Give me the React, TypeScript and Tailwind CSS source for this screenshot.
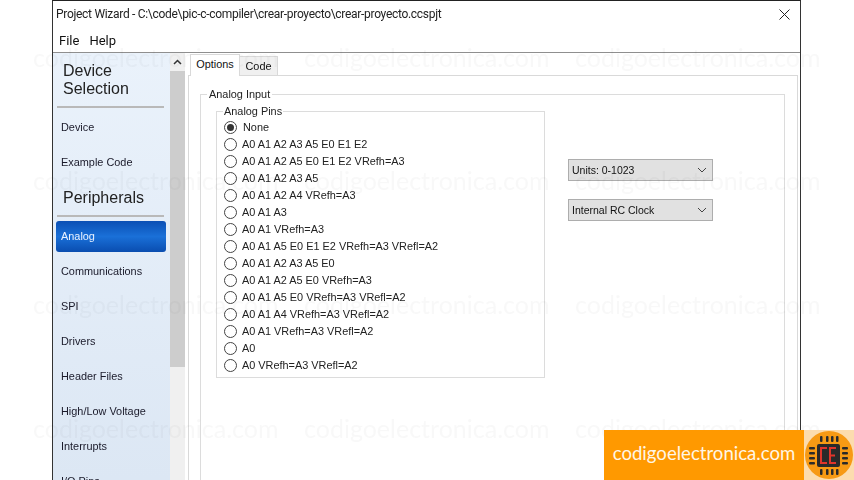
import React from "react";

const nav2 = ["Analog", "Communications", "SPI", "Drivers", "Header Files", "High/Low Voltage", "Interrupts", "I/O Pins"];
const pins = [
  "None",
  "A0 A1 A2 A3 A5 E0 E1 E2",
  "A0 A1 A2 A5 E0 E1 E2 VRefh=A3",
  "A0 A1 A2 A3 A5",
  "A0 A1 A2 A4 VRefh=A3",
  "A0 A1 A3",
  "A0 A1 VRefh=A3",
  "A0 A1 A5 E0 E1 E2 VRefh=A3 VRefl=A2",
  "A0 A1 A2 A3 A5 E0",
  "A0 A1 A2 A5 E0 VRefh=A3",
  "A0 A1 A5 E0 VRefh=A3 VRefl=A2",
  "A0 A1 A4 VRefh=A3 VRefl=A2",
  "A0 A1 VRefh=A3 VRefl=A2",
  "A0",
  "A0 VRefh=A3 VRefl=A2",
];
const marks = [57, 180, 304, 428];
const cols = [33, 304, 575];

function NavItem({ label, active }: { label: string; active?: boolean }) {
  if (active) {
    return (
      <div className="mx-[3px] my-[2px] flex h-[31px] w-[110px] shrink-0 items-center rounded-[3px] bg-gradient-to-b from-[#0b4fb4] via-[#1a70d8] to-[#0a4db0] pl-[5px] text-[#eaf2ff]">
        {label}
      </div>
    );
  }
  return <div className="flex h-[35px] shrink-0 items-center pl-[8px] text-[#1a1a2a]">{label}</div>;
}

function Select({ label }: { label: string }) {
  return (
    <div className="flex h-[22px] w-[145px] items-center justify-between border border-[#adadad] bg-[#e1e1e1] pl-[3px] pr-[5px] text-[10.5px] text-[#111]">
      <span>{label}</span>
      <svg width="10" height="6" viewBox="0 0 10 6" fill="none" stroke="#444" strokeWidth="1">
        <path d="M1 1l4 4 4-4" />
      </svg>
    </div>
  );
}

export default function App() {
  return (
    <div className="relative h-[480px] w-[854px] overflow-hidden bg-white font-['Liberation_Sans',sans-serif] text-[10.9px] leading-none">
      <div className="ml-[52px] flex h-[480px] w-[749px] flex-col border-x border-t border-x-[#333] border-t-[#222] bg-white">
        <div className="flex h-[26px] shrink-0 items-center justify-between pl-[3px] pr-[10px] font-['Roboto',sans-serif] text-[12px] tracking-[-0.3px] text-[#222]">
          <span>Project Wizard - C:\code\pic-c-compiler\crear-proyecto\crear-proyecto.ccspjt</span>
          <svg width="11" height="11" viewBox="0 0 11 11" stroke="#222" strokeWidth="1">
            <path d="M0.5 0.5l10 10M10.5 0.5l-10 10" />
          </svg>
        </div>
        <div className="flex h-[26px] shrink-0 items-center gap-[10px] border-b border-[#8f8f8f] pl-[6px] pt-[1px] font-['Roboto',sans-serif] text-[13px] text-[#111]">
          <span>File</span>
          <span>Help</span>
        </div>
        <div className="flex min-h-0 flex-1">
          <div className="flex w-[117px] shrink-0 flex-col overflow-hidden bg-gradient-to-b from-[#eaf2fb] to-[#dce7f4] text-[#1a1a2a]">
            <div className="shrink-0 pl-[10px] pt-[9px] text-[16px] leading-[18px] text-[#222]">
              Device
              <br />
              Selection
            </div>
            <div className="mx-[4px] mb-[2px] mt-[8px] h-[2px] w-[107px] shrink-0 bg-[#b9b9b9]" />
            <NavItem label="Device" />
            <NavItem label="Example Code" />
            <div className="shrink-0 pl-[10px] pt-[9px] text-[16px] leading-[18px] text-[#222]">Peripherals</div>
            <div className="mx-[4px] mb-[2px] mt-[8px] h-[2px] w-[107px] shrink-0 bg-[#b9b9b9]" />
            {nav2.map((n, i) => (
              <NavItem key={n} label={n} active={i === 0} />
            ))}
          </div>
          <div className="flex w-[15px] shrink-0 flex-col bg-[#f0f0f0]">
            <div className="flex h-[18px] items-center justify-center bg-[#f0f0f0]">
              <svg width="9" height="6" viewBox="0 0 9 6" fill="none" stroke="#333" strokeWidth="1.5">
                <path d="M1 5l3.5-3.5L8 5" />
              </svg>
            </div>
            <div className="h-[296px] bg-[#cdcdcd]" />
          </div>
          <div className="flex min-w-0 flex-1 flex-col pl-[3px] pr-[2px] pt-[1px]">
            <div className="flex h-[21px] shrink-0 items-end pl-[2px]">
              <div className="z-10 -mb-px flex h-[22px] w-[50px] items-center justify-center border-x border-t border-[#d9d9d9] bg-white pb-[3px] text-[#111]">
                Options
              </div>
              <div className="flex h-[19px] w-[38px] items-center justify-center border-r border-t border-[#d9d9d9] bg-[#f0f0f0] text-[#111]">
                Code
              </div>
            </div>
            <div className="min-h-0 flex-1 border-x border-t border-[#d9d9d9] pl-[11px] pr-[12px] pt-[18px]">
              <div className="relative h-[420px] border-x border-t border-[#dcdcdc] pl-[15px] pt-[16px]">
                <span className="absolute left-[6px] top-[-6px] bg-white px-[2px] text-[#222]">Analog Input</span>
                <div className="flex items-start">
                  <div className="relative h-[267px] w-[329px] border border-[#dcdcdc] pl-[7px] pt-[7px]">
                    <span className="absolute left-[6px] top-[-6px] bg-white px-[1px] text-[#222]">Analog Pins</span>
                    {pins.map((p, i) => (
                      <div key={p} className="flex h-[17px] items-center gap-[5px] text-[#222]">
                        <span className="flex h-[13px] w-[13px] items-center justify-center rounded-full border border-[#444] bg-white">
                          {i === 0 && <span className="h-[7px] w-[7px] rounded-full bg-[#333]" />}
                        </span>
                        <span className={i === 0 ? "pl-[1px]" : ""}>{p}</span>
                      </div>
                    ))}
                  </div>
                  <div className="ml-[23px] mt-[48px] flex flex-col gap-[18px]">
                    <Select label="Units: 0-1023" />
                    <Select label="Internal RC Clock" />
                  </div>
                </div>
              </div>
            </div>
          </div>
        </div>
      </div>

      {marks.map((y) =>
        cols.map((x) => (
          <span
            key={`${x}-${y}`}
            style={{ left: x, top: y - 14 }}
            className="pointer-events-none absolute font-['Lato',sans-serif] text-[25px] leading-[28px] text-[#f4f4f4] opacity-60 mix-blend-multiply"
          >
            codigoelectronica.com
          </span>
        ))
      )}

      <div className="absolute bottom-0 right-0 flex h-[50px] w-[250px]">
        <div className="flex w-[200px] items-center justify-center bg-[#ff9900] pb-[4px] font-['Lato',sans-serif] text-[18.6px] text-[#fff6e6]">
          codigoelectronica.com
        </div>
        <div className="flex w-[50px] items-center justify-center bg-[#fcdcae]">
          <svg width="48" height="48" viewBox="0 0 48 48">
            <circle cx="24" cy="24" r="24" fill="#f79a14" />
            <rect x="12" y="13" width="23" height="23" rx="2" fill="#2a2a2a" />
            <g fill="#2a2a2a">
              <rect x="15" y="5" width="2.5" height="6" rx="1" />
              <rect x="21" y="5" width="2.5" height="6" rx="1" />
              <rect x="26" y="5" width="2.5" height="6" rx="1" />
              <rect x="31" y="5" width="2.5" height="6" rx="1" />
              <rect x="15" y="38" width="2.5" height="6" rx="1" />
              <rect x="21" y="38" width="2.5" height="6" rx="1" />
              <rect x="26" y="38" width="2.5" height="6" rx="1" />
              <rect x="31" y="38" width="2.5" height="6" rx="1" />
              <rect x="4" y="16" width="6" height="2.5" rx="1" />
              <rect x="4" y="21" width="6" height="2.5" rx="1" />
              <rect x="4" y="26" width="6" height="2.5" rx="1" />
              <rect x="4" y="31" width="6" height="2.5" rx="1" />
              <rect x="37" y="16" width="6" height="2.5" rx="1" />
              <rect x="37" y="21" width="6" height="2.5" rx="1" />
              <rect x="37" y="26" width="6" height="2.5" rx="1" />
              <rect x="37" y="31" width="6" height="2.5" rx="1" />
            </g>
            <path d="M22 17h-6v15h6M31 17h-6v15h6M25 24.5h5" fill="none" stroke="#e0352b" strokeWidth="2" />
          </svg>
        </div>
      </div>
    </div>
  );
}
